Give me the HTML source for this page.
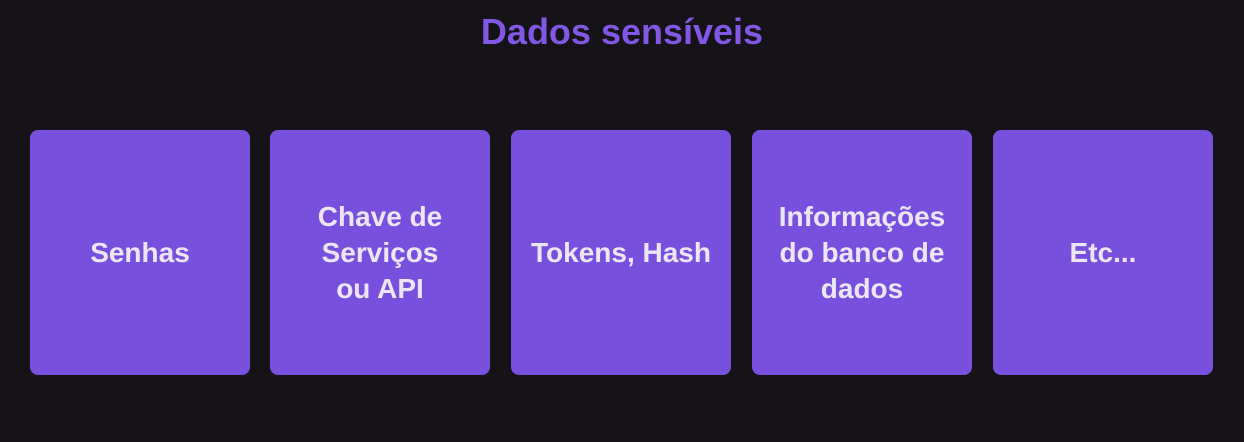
<!DOCTYPE html>
<html><head><style>
html,body{margin:0;padding:0;background:#151317;width:1244px;height:442px;overflow:hidden;font-family:"Liberation Sans",Arial,sans-serif;}
h1{position:absolute;left:0;width:1244px;top:10px;margin:0;text-align:center;font-size:36px;font-weight:bold;color:#8257e5;line-height:44px;}
.c{position:absolute;top:130px;width:220px;height:245px;background:#7950de;border-radius:8px;display:flex;align-items:center;justify-content:center;text-align:center;color:#ece6f4;font-weight:bold;font-size:28px;line-height:36px;}
</style></head><body>
<h1>Dados sensíveis</h1>
<div class="c" style="left:30px">Senhas</div>
<div class="c" style="left:270px">Chave de<br>Serviços<br>ou API</div>
<div class="c" style="left:511px">Tokens, Hash</div>
<div class="c" style="left:752px">Informações<br>do banco de<br>dados</div>
<div class="c" style="left:993px">Etc...</div>
</body></html>
